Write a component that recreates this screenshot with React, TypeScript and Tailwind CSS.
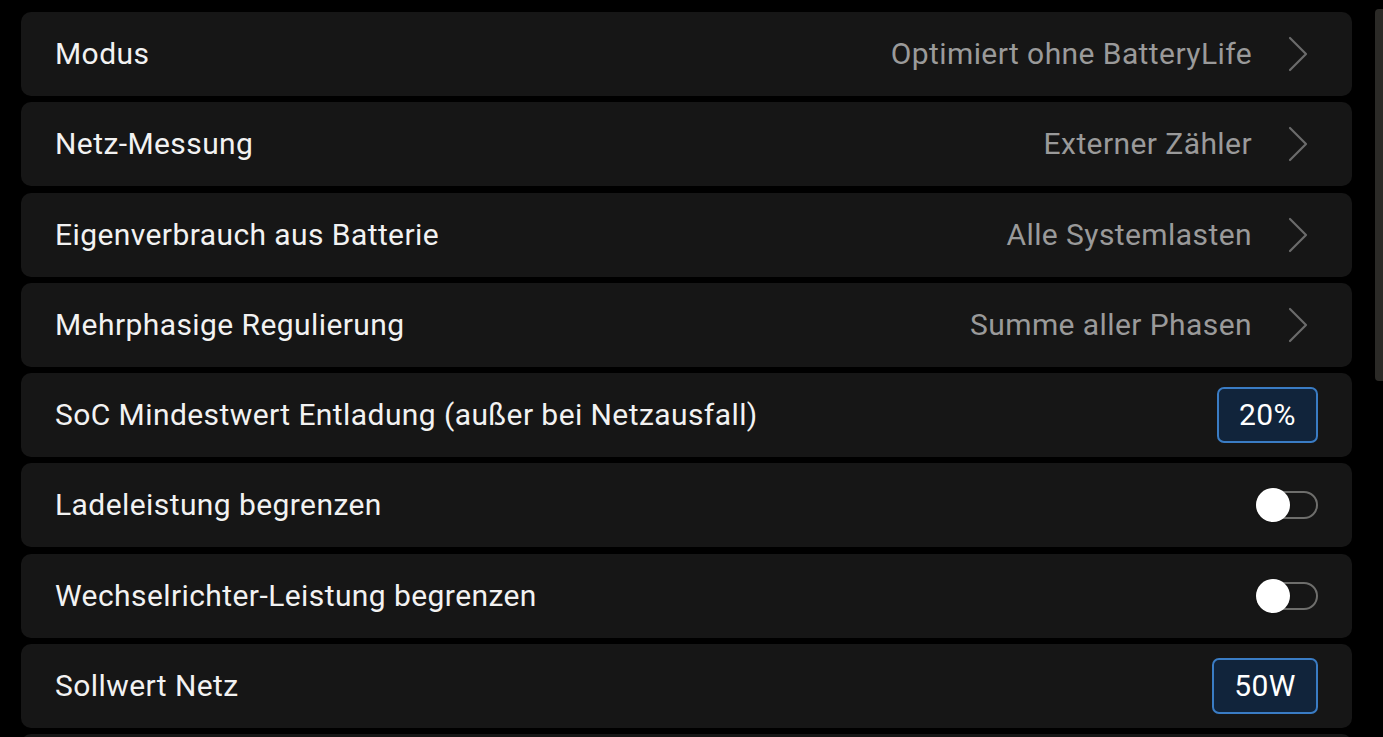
import { ReactNode } from 'react';

type Row =
  | { kind: 'select'; label: string; value: string }
  | { kind: 'input'; label: string; value: string; width: string }
  | { kind: 'toggle'; label: string; on: boolean }
  | { kind: 'blank'; label: string };

const rows: Row[] = [
  { kind: 'select', label: 'Modus', value: 'Optimiert ohne BatteryLife' },
  { kind: 'select', label: 'Netz-Messung', value: 'Externer Zähler' },
  { kind: 'select', label: 'Eigenverbrauch aus Batterie', value: 'Alle Systemlasten' },
  { kind: 'select', label: 'Mehrphasige Regulierung', value: 'Summe aller Phasen' },
  { kind: 'input', label: 'SoC Mindestwert Entladung (außer bei Netzausfall)', value: '20%', width: 'w-[101px]' },
  { kind: 'toggle', label: 'Ladeleistung begrenzen', on: false },
  { kind: 'toggle', label: 'Wechselrichter-Leistung begrenzen', on: false },
  { kind: 'input', label: 'Sollwert Netz', value: '50W', width: 'w-[106px]' },
  // next row only peeks in at the bottom edge
  { kind: 'blank', label: '' },
];

function Chevron() {
  return (
    <svg width="22" height="36" viewBox="0 0 22 36" fill="none" className="shrink-0">
      <path d="M3 2 L19 18 L3 34" stroke="#6b6b6b" strokeWidth="2.2" strokeLinecap="round" strokeLinejoin="round" />
    </svg>
  );
}

function Toggle({ on }: { on: boolean }) {
  return (
    <div className="relative w-[62px] h-[34px] flex items-center">
      <div className="absolute left-[10px] right-0 h-[28px] rounded-full border-2 border-[#6e6e6c]" />
      <div className={`absolute top-0 w-[34px] h-[34px] rounded-full bg-white shadow ${on ? 'right-0' : 'left-0'}`} />
    </div>
  );
}

function SettingRow({ row }: { row: Row }) {
  let right: ReactNode = null;
  if (row.kind === 'select') {
    right = (
      <div className="flex items-center gap-[35px] pr-[9px]">
        <span className="text-[#9a9a9a]">{row.value}</span>
        <Chevron />
      </div>
    );
  } else if (row.kind === 'input') {
    right = (
      <div
        className={`${row.width} h-[56px] flex items-center justify-center rounded-[7px] border-2 border-[#3a7cc4] bg-[#11243b] text-white`}
      >
        {row.value}
      </div>
    );
  } else if (row.kind === 'toggle') {
    right = <Toggle on={row.on} />;
  }

  return (
    <div className="h-[84px] shrink-0 rounded-[10px] bg-[#161616] flex items-center justify-between pl-[34px] pr-[34px]">
      <span className="text-[#f2f2f2]">{row.label}</span>
      {right}
    </div>
  );
}

export default function App() {
  return (
    <div
      className="h-[737px] w-[1383px] bg-black overflow-hidden flex text-[30px] leading-none tracking-[0.42px]"
      style={{ fontFamily: 'Roboto, "Noto Sans", sans-serif' }}
    >
      {/* Settings list */}
      <div className="w-[1331px] ml-[21px] pt-[12px] flex flex-col gap-[6.3px]">
        {rows.map((row, i) => (
          <SettingRow key={i} row={row} />
        ))}
      </div>

      {/* Scrollbar */}
      <div className="ml-[23px] mt-[9px] w-[8px] h-[372px] rounded-l-[4px] bg-[#2b2a27]" />
    </div>
  );
}
